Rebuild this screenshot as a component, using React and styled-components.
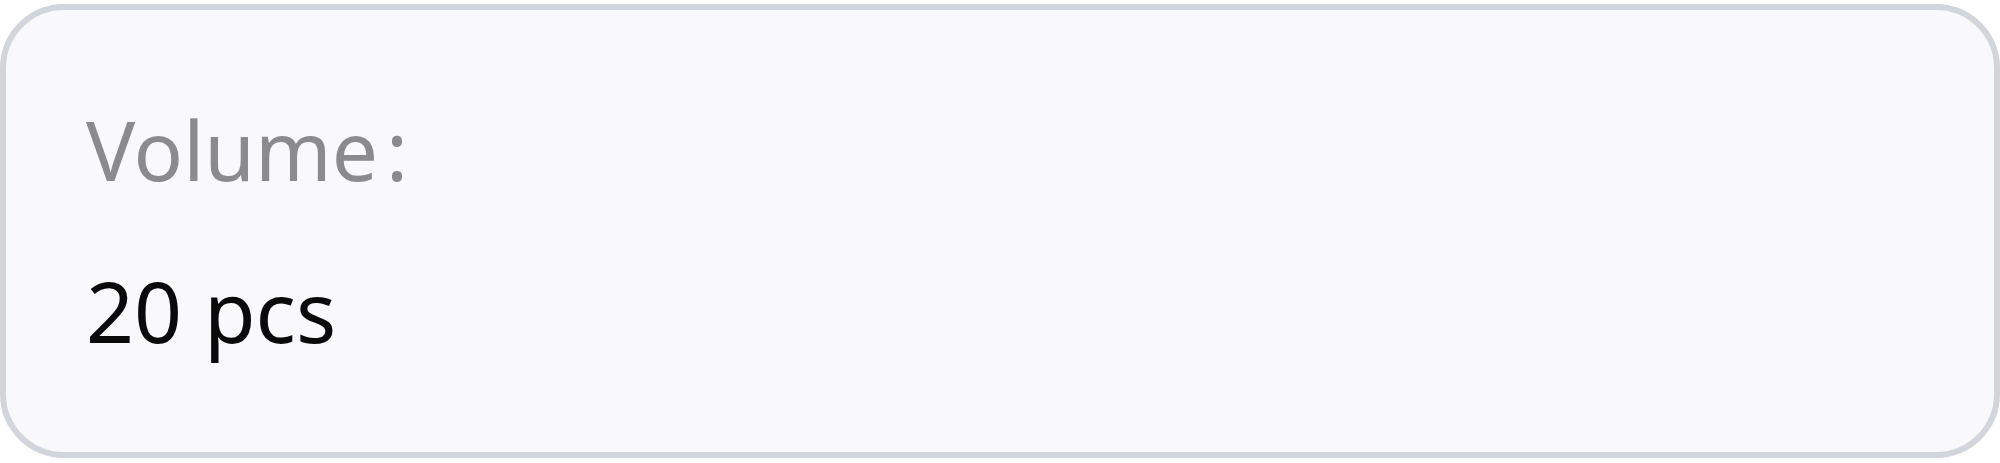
import React from 'react';
import styled, { createGlobalStyle } from 'styled-components';

const GlobalStyle = createGlobalStyle`
	html, body {
		margin: 0;
		padding: 0;
		background: #ffffff;
	}
`;

const Page = styled.div`
	padding-top: 4px;
	width: 2000px;
`;

const Card = styled.div`
	box-sizing: border-box;
	height: 454px;
	border: 6px solid #d2d5db;
	border-radius: 64px;
	background: #f9f9fb;
	padding: 83px 80px 0;
	font-family: 'Noto Sans', 'Noto Sans CJK SC', sans-serif;
	font-weight: 440;
`;

const Label = styled.div`
	font-size: 82px;
	line-height: 112px;
	color: #8a8a8f;
`;

const Colon = styled.span`
	margin-left: 8px;
`;

const Value = styled.div`
	margin-top: 50px;
	font-size: 84px;
	line-height: 112px;
	color: ${(p) => p.color || '#0a0a0a'};
`;

const App = () => (
	<>
		<GlobalStyle />
		<Page>
			<Card>
				<Label>
					Volume<Colon>:</Colon>
				</Label>
				<Value>20 pcs</Value>
			</Card>
		</Page>
	</>
);

export default App;
